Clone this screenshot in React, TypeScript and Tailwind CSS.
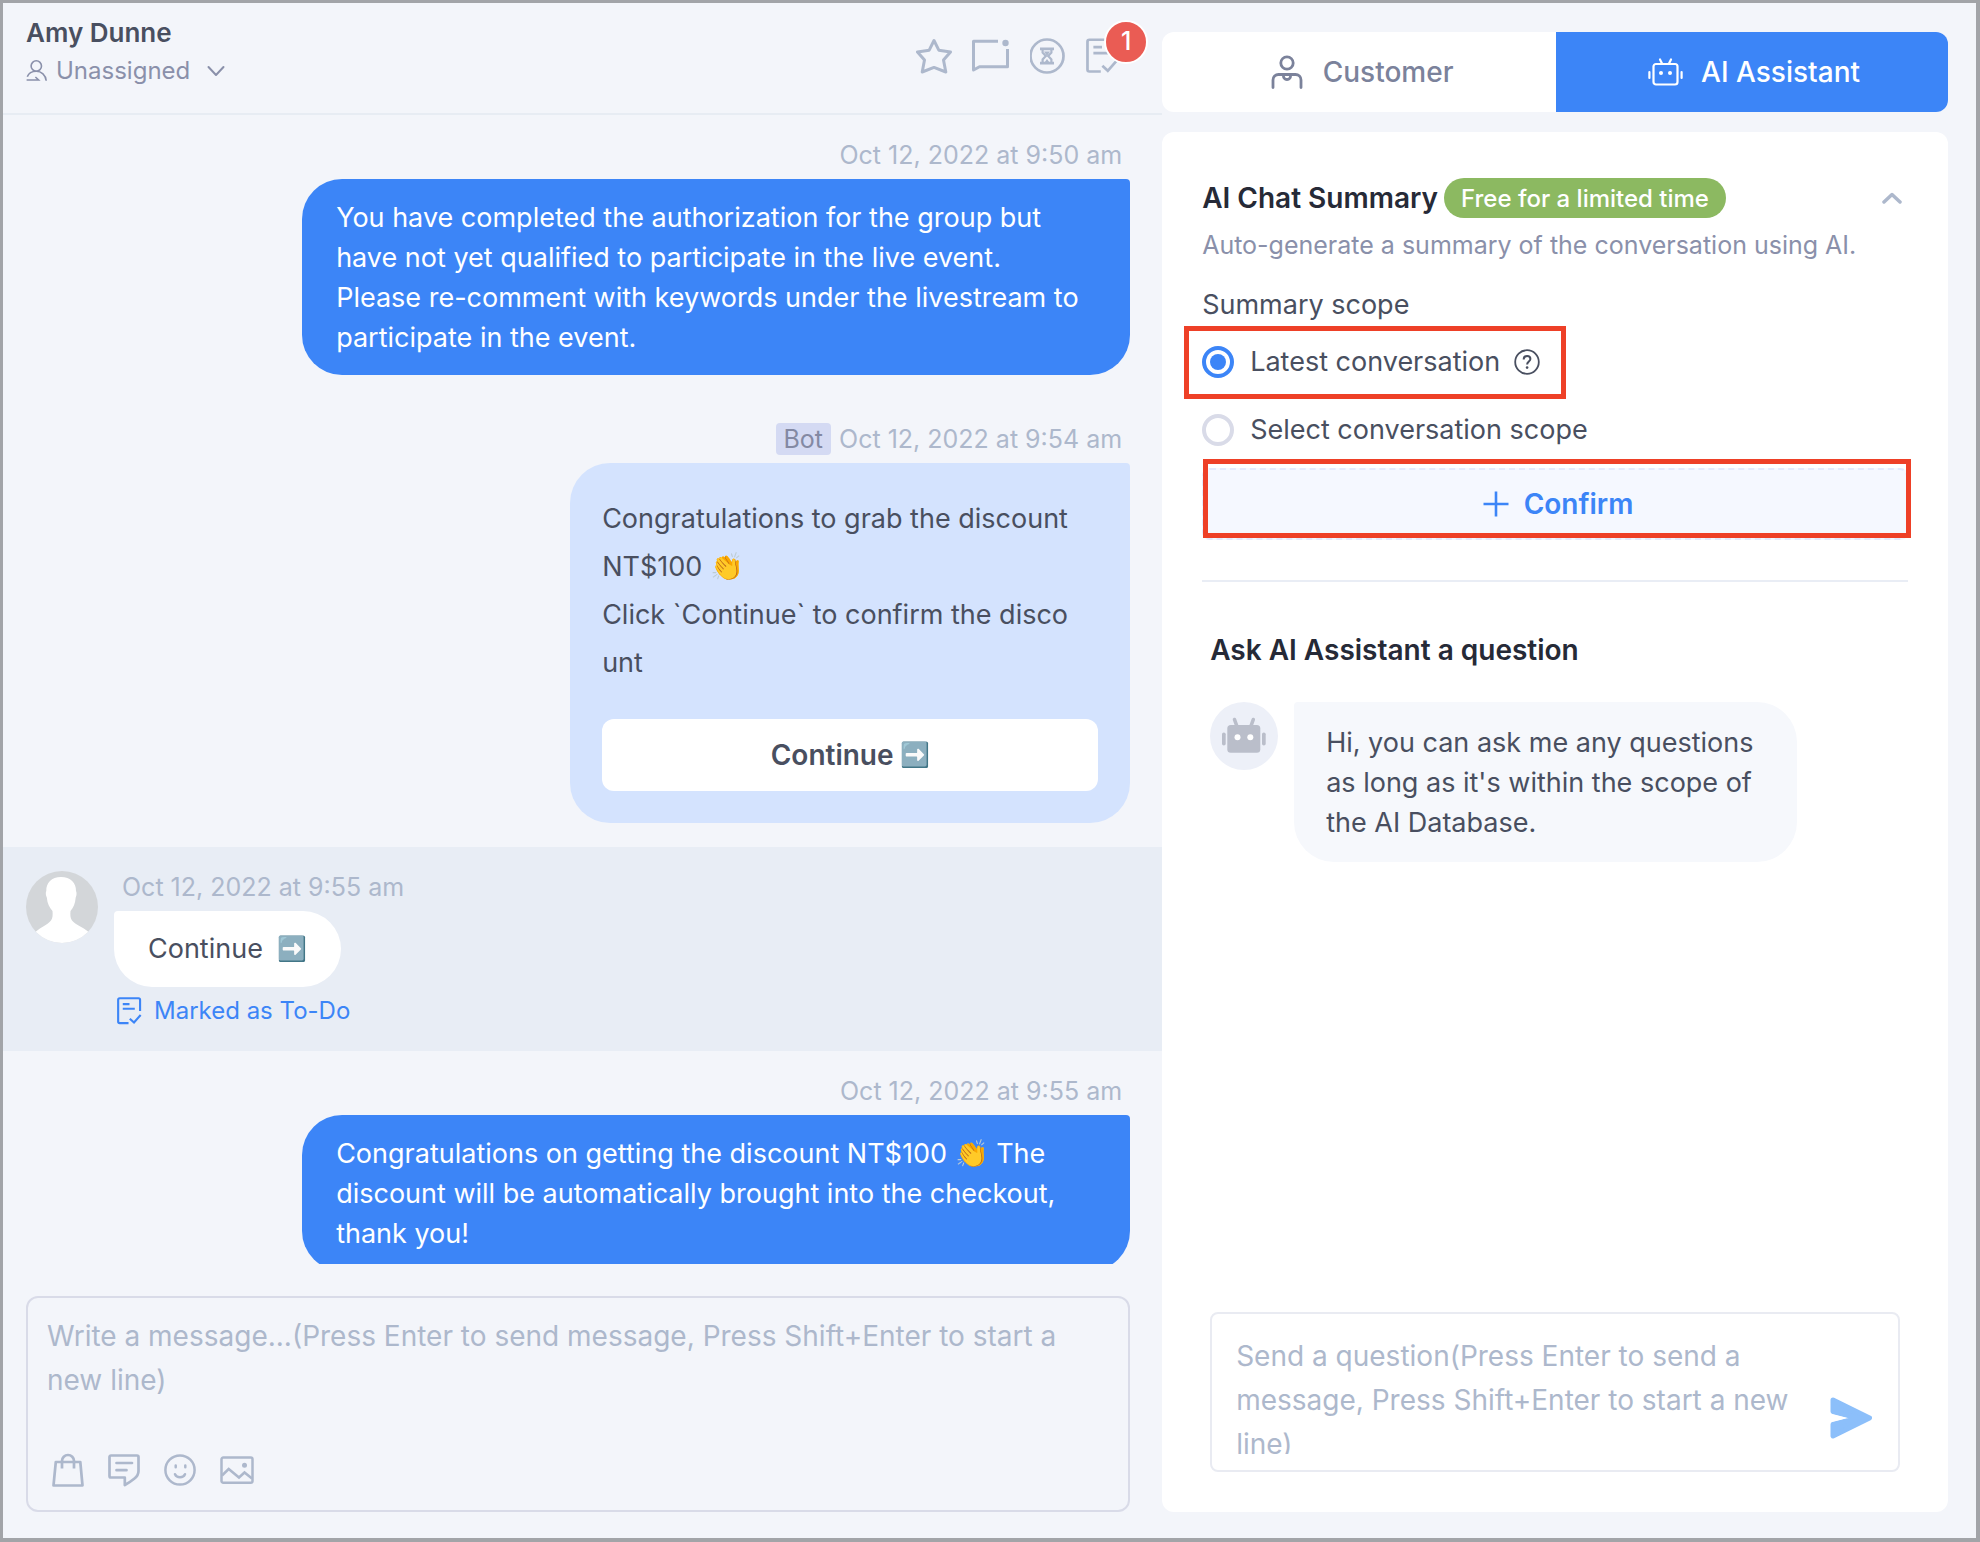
import { useState } from 'react'
import type { ReactNode } from 'react'

// ── Icons ────────────────────────────────────────────────────────

function StarIcon() {
  return (
    <svg width="36" height="36" viewBox="0 0 36 36" fill="none" stroke="currentColor" strokeWidth="3" strokeLinejoin="round">
      <path d="M18 2.5L22.8 12.2L34.5 14L27.5 22L29.8 34L18 29.4L6.2 34L8.5 22L1.5 14L13.2 12.2Z" />
    </svg>
  )
}

function UnreadIcon() {
  return (
    <svg width="38" height="34" viewBox="2 0 38 34" fill="none" stroke="currentColor" strokeWidth="3">
      <path d="M28 2.3H3.5V31L9.5 27.7H37.5V10" strokeLinejoin="round" />
      <circle cx="35.5" cy="4" r="3.2" fill="currentColor" stroke="none" />
    </svg>
  )
}

function HourglassIcon() {
  return (
    <svg width="36" height="36" viewBox="1 0 36 36" fill="none" stroke="currentColor" strokeWidth="2.7">
      <circle cx="18" cy="18" r="16.5" />
      <path d="M11 10.8H25M11 25.2H25" />
      <path d="M13.6 11v3.6L16.8 18l-3.2 3.4V25M22.4 11v3.6L19.2 18l3.2 3.4V25" strokeWidth="2.2" />
      <path d="M15 13.5h6L18 18zM15.5 24.5L18 21l2.5 3.5z" fill="currentColor" stroke="none" />
    </svg>
  )
}

function TodoIcon({ className }: { className: string }) {
  return (
    <svg className={className} viewBox="0 0 26 28.8" fill="none" stroke="currentColor" strokeWidth="2.2">
      <path d="M24 14.5V2.8a1.6 1.6 0 0 0-1.6-1.6H2.8a1.6 1.6 0 0 0-1.6 1.6V25.4a1.6 1.6 0 0 0 1.6 1.6H12" />
      <path d="M6 7.2h7M6 12h12.5M13.3 22.4l4.4 4L24.6 18.5" />
    </svg>
  )
}

function AssigneeIcon() {
  return (
    <svg width="22" height="22" viewBox="0 0 22 22" fill="none" stroke="currentColor" strokeWidth="1.6">
      <circle cx="10.3" cy="6" r="5.2" />
      <path d="M1.3 16.8C2.6 13.2 5.8 11.3 10.3 11.3c5 0 9.4 3.6 9.9 9.4" />
      <path d="M.6 20H12.6L9.4 17" />
    </svg>
  )
}

function CustomerIcon() {
  return (
    <svg width="32" height="34" viewBox="0 0 32 34" fill="none" stroke="currentColor" strokeWidth="2.8">
      <circle cx="16" cy="8" r="6.2" />
      <path d="M2 32.5V25a5.5 5.5 0 0 1 5.5-5.5h17A5.5 5.5 0 0 1 30 25v7.5" strokeLinecap="round" />
      <path d="M12.3 20c.3 6 7.1 6 7.4 0" />
    </svg>
  )
}

function RobotIcon() {
  return (
    <svg width="35" height="28" viewBox="0 0 35 28" fill="none" stroke="currentColor" strokeWidth="2.2" strokeLinecap="round">
      <rect x="5.5" y="6" width="24" height="20.5" rx="2.5" />
      <path d="M1.4 14v6M33.6 14v6M12 1.5l2 4M23 1.5l-2 4" />
      <circle cx="13" cy="15" r="2" fill="currentColor" stroke="none" />
      <circle cx="22" cy="15" r="2" fill="currentColor" stroke="none" />
    </svg>
  )
}

function RobotAvatar() {
  return (
    <svg width="68" height="68" viewBox="0 0 68 68" className="shrink-0">
      <circle cx="34" cy="34" r="34" fill="#edf0f8" />
      <g fill="#babeca">
        <rect x="17.3" y="23" width="33" height="27.7" rx="3.5" />
        <rect x="12" y="30.5" width="3.7" height="13" rx="1.8" />
        <rect x="52" y="30.5" width="3.7" height="13" rx="1.8" />
      </g>
      <path d="M24.5 17.5l2.5 7M43.3 17.5l-2.5 7" stroke="#babeca" strokeWidth="3.6" strokeLinecap="round" />
      <circle cx="27.5" cy="35.3" r="3" fill="#fff" />
      <circle cx="40.3" cy="35.3" r="3" fill="#fff" />
    </svg>
  )
}

function UserAvatar() {
  return (
    <svg width="72" height="72" viewBox="0 0 72 72" className="shrink-0 rounded-full bg-[#d3d6d9]">
      <path
        d="M35 6C25.5 6 20 12 20.3 20c-.8 1.5-.6 4 .5 6.500.5 6 2.700 10 5.700 13.500.3 4 .3 7-1.500 9.500C21.500 54 15 56 10 60.500V72h52V60.500C57 56 49.500 54 46 49.500c-1.800-2.500-1.800-5.500-1.500-9.500 3-3.500 4.700-7.500 5.200-13.500 1.100-2.500 1.100-5 .3-6.500C50.300 12 44.500 6 35 6Z"
        fill="#fff"
      />
    </svg>
  )
}

function BagIcon() {
  return (
    <svg width="32" height="34" viewBox="0 0 32 34" fill="none" stroke="currentColor" strokeWidth="2.7">
      <path d="M3.8 9H28.3L30.5 32.5H1.5Z" strokeLinejoin="round" />
      <path d="M10 15.5V8a6 6 0 0 1 12 0v7.5" />
    </svg>
  )
}

function NoteIcon() {
  return (
    <svg width="32" height="33" viewBox="0 0 32 33" fill="none" stroke="currentColor" strokeWidth="2.7" strokeLinecap="round" strokeLinejoin="round">
      <path d="M3 1.5H29A1.5 1.5 0 0 1 30.5 3V17c0 3-1.5 5.5-4 7.5-3 2.5-6 4.5-9.7 6.5V23.5H3A1.5 1.5 0 0 1 1.5 22V3A1.5 1.5 0 0 1 3 1.5Z" />
      <path d="M8.5 9H24M8.5 16.2H18.5" />
    </svg>
  )
}

function SmileIcon() {
  return (
    <svg width="32" height="32" viewBox="0 0 32 32" fill="none" stroke="currentColor" strokeWidth="2.5" strokeLinecap="round">
      <circle cx="16" cy="16" r="14.6" />
      <path d="M11.7 11.5v1.8M21.3 11.5v1.8M11 20.2c1.8 4 8.2 4 10 0" />
    </svg>
  )
}

function ImageIcon() {
  return (
    <svg width="34" height="28" viewBox="0 0 34 28" fill="none" stroke="currentColor" strokeWidth="2.5">
      <rect x="1.5" y="1.5" width="31" height="25.2" rx="1.8" />
      <path d="M2 19.5L8.7 13L19 21.5L24.5 16.5L32 22.5" />
      <circle cx="24.5" cy="9.2" r="2.5" fill="currentColor" stroke="none" />
    </svg>
  )
}

function HelpIcon() {
  return (
    <svg width="26" height="26" viewBox="0 0 26 26" fill="none" stroke="currentColor" strokeWidth="1.8">
      <circle cx="13" cy="13" r="11.8" />
      <path d="M9.7 10.5c0-2.200 1.400-3.500 3.400-3.500s3.300 1.300 3.300 3.100c0 2.400-3.300 2.600-3.300 5.400" strokeWidth="2" />
      <circle cx="13.1" cy="18.6" r="1.3" fill="currentColor" stroke="none" />
    </svg>
  )
}

function SendIcon() {
  return (
    <svg width="42" height="42" viewBox="0 0 42 42" fill="#8cbffa" stroke="#8cbffa" strokeLinejoin="round">
      <path d="M3 3L39.5 21L3 39V27.5L28 21L3 14.5Z" strokeWidth="5" clipPath="url(#send-notch)" />
      <clipPath id="send-notch">
        <path d="M0 0H42V42H0V25.3L17 21L0 16.7Z" />
      </clipPath>
    </svg>
  )
}

function Chevron({ className, d }: { className: string; d: string }) {
  return (
    <svg className={className} viewBox="0 0 20 12" fill="none" stroke="currentColor" strokeLinecap="round" strokeLinejoin="round">
      <path d={d} />
    </svg>
  )
}

// ── Chat pieces ──────────────────────────────────────────────────

function ArrowEmoji() {
  return <span className="text-[24px] leading-8">➡️</span>
}

function Timestamp({ time, bot }: { time: string; bot?: boolean }) {
  return (
    <p className="mb-2 flex h-8 items-center gap-2 px-2 text-[25px] text-[#adb8cc]">
      {bot && (
        <span className="flex h-8 items-center rounded bg-[#d4daf3] px-2 pt-0.5 text-[#8389a3]">Bot</span>
      )}
      <time className="pt-0.5">Oct 12, 2022 at {time}</time>
    </p>
  )
}

function Outgoing({ time, bot, children }: { time: string; bot?: boolean; children: ReactNode }) {
  return (
    <article className="flex flex-col items-end px-8 py-6">
      <Timestamp time={time} bot={bot} />
      {children}
    </article>
  )
}

function BlueBubble({ children }: { children: ReactNode }) {
  return (
    <div className="max-w-[828px] rounded-[40px] rounded-tr bg-[#3c85f7] px-[34px] pt-[19px] pb-[17px] text-[27px] leading-10 whitespace-pre-line text-white">
      {children}
    </div>
  )
}

function ChatColumn() {
  return (
    <main className="flex min-w-0 flex-1 flex-col">
      <header className="flex h-28 shrink-0 items-start justify-between border-b-2 border-[#e7ecf3] pr-11 pl-[23px]">
        <div className="pt-3">
          <h1 className="text-[26px] leading-9 font-semibold text-[#494f60]">Amy Dunne</h1>
          <button className="mt-0.5 flex h-9 items-center text-[24px] text-[#8a90aa]">
            <AssigneeIcon />
            <span className="ml-2">Unassigned</span>
            <Chevron className="ml-4 h-3 w-5 stroke-2" d="M2.5 2L10 10L17.5 2" />
          </button>
        </div>
        <div className="mt-[35px] flex h-9 items-center gap-5 text-[#adb8cc]">
          <button aria-label="Star"><StarIcon /></button>
          <button aria-label="Mark as unread"><UnreadIcon /></button>
          <button aria-label="Snooze"><HourglassIcon /></button>
          <button aria-label="To-Do" className="relative">
            <TodoIcon className="h-9 w-8" />
            <span className="absolute -top-[18px] left-[18px] flex size-11 items-center justify-center rounded-full border-2 border-white bg-[#ea5c54] text-[25px] font-medium text-white">
              1
            </span>
          </button>
        </div>
      </header>

      <section className="min-h-0 flex-1 overflow-hidden">
        <Outgoing time="9:50 am">
          <BlueBubble>
            {'You have completed the authorization for the group but have not yet qualified to participate in the live event.\nPlease re-comment with keywords under the livestream to participate in the event.'}
          </BlueBubble>
        </Outgoing>

        <Outgoing time="9:54 am" bot>
          <div className="w-[560px] rounded-[40px] rounded-tr bg-[#d4e3fe] p-8 text-[27px] text-[#494f60]">
            <p className="leading-[48px] whitespace-pre-line">
              {'Congratulations to grab the discount NT$100 👏\nClick `Continue` to confirm the disco\nunt'}
            </p>
            <button className="mt-8 flex h-[72px] w-full items-center justify-center gap-1.5 rounded-xl bg-white text-[28px] font-semibold">
              Continue <ArrowEmoji />
            </button>
          </div>
        </Outgoing>

        <article className="flex gap-4 bg-[#e8edf5] py-6 pr-8 pl-[23px]">
          <UserAvatar />
          <div className="flex flex-col items-start">
            <Timestamp time="9:55 am" />
            <div className="flex items-center gap-3.5 rounded-[38px] rounded-tl bg-white px-[34px] py-[18px] text-[27px] leading-10 text-[#494f60]">
              Continue <ArrowEmoji />
            </div>
            <a href="#todo" className="mt-2 ml-[3px] flex h-8 items-center gap-3 text-[24px] text-[#3c85f7]">
              <TodoIcon className="h-7 w-[25px]" />
              Marked as To-Do
            </a>
          </div>
        </article>

        <Outgoing time="9:55 am">
          <BlueBubble>
            {'Congratulations on getting the discount NT$100 👏 The discount will be automatically brought into the checkout, thank you!'}
          </BlueBubble>
        </Outgoing>
      </section>

      <form className="mt-8 mr-8 mb-[26px] ml-[23px] flex h-[216px] shrink-0 flex-col rounded-xl border-2 border-[#d9dbe8] px-[19px] pt-4 pb-[23px]">
        <textarea
          aria-label="Message"
          className="min-h-0 flex-1 resize-none overflow-hidden bg-transparent text-[28px] leading-[44px] outline-none placeholder:text-[#adb8cc]"
          placeholder="Write a message...(Press Enter to send message, Press Shift+Enter to start a new line)"
        />
        <div className="flex h-[34px] items-center gap-6 pl-[5px] text-[#adb8cc]">
          <button type="button" aria-label="Products"><BagIcon /></button>
          <button type="button" aria-label="Saved replies"><NoteIcon /></button>
          <button type="button" aria-label="Emoji"><SmileIcon /></button>
          <button type="button" aria-label="Image"><ImageIcon /></button>
        </div>
      </form>
    </main>
  )
}

// ── Side panel ───────────────────────────────────────────────────

const RADIO =
  'size-8 appearance-none rounded-full border-4 border-[#d9dbe8] bg-clip-content p-1 checked:border-[#3c85f7] checked:bg-[#3c85f7]'

function SummarySection() {
  const [scope, setScope] = useState<'latest' | 'select'>('latest')

  return (
    <section className="flex flex-col items-start">
      <div className="flex h-10 w-full items-center">
        <h2 className="text-[28px] font-semibold text-[#262a37]">AI Chat Summary</h2>
        <span className="ml-1.5 flex h-10 items-center rounded-full bg-[#8cb961] px-[17px] pt-px text-[24px] font-medium text-white">
          Free for a limited time
        </span>
        <button aria-label="Collapse" className="mr-1.5 ml-auto text-[#adb8cc]">
          <Chevron className="h-3 w-5 stroke-[3.5]" d="M2 10L10 2.5L18 10" />
        </button>
      </div>
      <p className="mt-2 text-[25px] leading-[38px] text-[#8a90aa]">
        Auto-generate a summary of the conversation using AI.
      </p>

      <p className="mt-[21px] text-[27px] leading-10 text-[#494f60]">Summary scope</p>
      <label className="mt-px -ml-[18px] flex items-center border-[5px] border-[#ee4027] pt-[15px] pr-[21px] pb-4 pl-[13px] text-[27px] leading-8 text-[#494f60]">
        <input
          type="radio"
          name="scope"
          className={RADIO}
          checked={scope === 'latest'}
          onChange={() => setScope('latest')}
        />
        <span className="mr-3.5 ml-4">Latest conversation</span>
        <HelpIcon />
      </label>
      <label className="mt-[11px] flex items-center text-[27px] leading-10 text-[#494f60]">
        <input
          type="radio"
          name="scope"
          className={RADIO}
          checked={scope === 'select'}
          onChange={() => setScope('select')}
        />
        <span className="ml-4">Select conversation scope</span>
      </label>

      <button className="relative mt-[18px] flex h-[72px] w-full items-center justify-center gap-[15px] rounded-lg border-2 border-dashed border-[#e3eafd] bg-[#f5f8ff] pl-1.5 text-[28px] font-semibold text-[#3c85f7]">
        <svg width="26" height="26" viewBox="0 0 26 26" stroke="currentColor" strokeWidth="2.6">
          <path d="M13 .5V25.5M.5 13H25.5" />
        </svg>
        Confirm
        <span className="pointer-events-none absolute -top-[11px] -right-[5px] bottom-0 -left-px border-[5px] border-[#ee4027]" />
      </button>
      <hr className="mt-10 w-full border-t-2 border-[#e9edf5]" />
    </section>
  )
}

function AskSection() {
  return (
    <section className="mt-12 flex min-h-0 flex-1 flex-col px-2">
      <h2 className="text-[28px] leading-10 font-semibold text-[#262a37]">
        Ask AI Assistant a question
      </h2>
      <div className="mt-8 flex items-start gap-4">
        <RobotAvatar />
        <p className="max-w-[503px] rounded-[40px] rounded-tl bg-[#f6f8fc] px-8 pt-[21px] pb-[19px] text-[27px] leading-10 text-[#494f60]">
          Hi, you can ask me any questions as long as it's within the scope of the AI Database.
        </p>
      </div>
      <form className="mt-auto flex items-center rounded-lg border-2 border-[#e9ebf2] pt-5 pr-[26px] pb-4 pl-6">
        <textarea
          aria-label="Question"
          className="h-[120px] min-w-0 flex-1 resize-none overflow-hidden text-[28px] leading-[44px] outline-none placeholder:text-[#adb8cc]"
          placeholder="Send a question(Press Enter to send a message, Press Shift+Enter to start a new line)"
        />
        <button type="button" aria-label="Send" className="mt-12 ml-8">
          <SendIcon />
        </button>
      </form>
    </section>
  )
}

function AssistantColumn() {
  return (
    <aside className="flex w-[41.25%] shrink-0 flex-col gap-5 pt-[29px] pr-7 pb-[26px]">
      <nav className="flex h-20 shrink-0 overflow-hidden rounded-xl bg-white text-[28px] font-medium">
        <button className="flex flex-1 items-center justify-center gap-5 pl-1.5 text-[#7b829b]">
          <CustomerIcon />
          Customer
        </button>
        <button className="flex flex-1 items-center justify-center gap-[18px] bg-[#3c85f7] pl-1 text-white">
          <RobotIcon />
          AI Assistant
        </button>
      </nav>
      <div className="flex min-h-0 flex-1 flex-col rounded-xl bg-white px-10 pt-[46px] pb-10">
        <SummarySection />
        <AskSection />
      </div>
    </aside>
  )
}

export default function App() {
  return (
    <div className="flex h-screen border-t-[3px] border-r-4 border-b-4 border-l-[3px] border-[#a2a4a8] bg-[#f3f5fa] font-['Inter',sans-serif]">
      <ChatColumn />
      <AssistantColumn />
    </div>
  )
}
